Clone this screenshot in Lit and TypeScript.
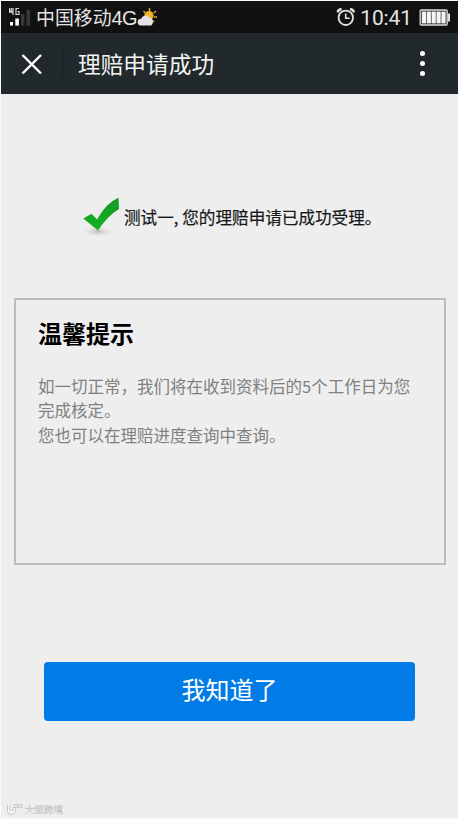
import { LitElement, html, css, svg } from "lit";
import { customElement } from "lit/decorators.js";

@customElement("status-bar")
class StatusBar extends LitElement {
  static styles = css`
    :host { display: flex; align-items: center; justify-content: space-between; height: 32px; background: #111; color: #e4e4e4; }
    .side { display: flex; align-items: center; }
    .carrier { font-size: 18.9px; line-height: 32px; margin-left: 5px; }
    .latin { font-family: "Liberation Sans", sans-serif; font-size: 20px; letter-spacing: -0.7px; }
    .time { font-family: Roboto, sans-serif; font-size: 21px; line-height: 32px; letter-spacing: -0.1px; margin: 1px 7px 0 4px; }
    .battery { margin-right: 8px; }
    svg { display: block; flex: none; }
  `;
  render() {
    return html`
      <div class="side">
        <svg width="30" height="32" viewBox="1 1 30 32">
          <path d="M11.3 8v3.6H9.4M13 8v7M9.6 8.2v4h4M19 8.5h-3v6h3v-3h-1.4" fill="none" stroke="#ddd" stroke-width="1.2"/>
          <rect x="10" y="22" width="3" height="3.6" fill="#fff"/>
          <rect x="15.3" y="18.5" width="3.6" height="7.1" fill="#fff"/>
          <rect x="21" y="14" width="3.4" height="11.6" fill="#383838"/>
          <rect x="26.5" y="10" width="3.5" height="15.6" fill="#383838"/>
        </svg>
        <div class="carrier">中国移动<span class="latin">4G</span></div>
        <svg width="20" height="32" viewBox="138 1 20 32">
          <path d="M150.5 8v3M144.5 11l2 2M157 11l-2.2 2M158 17h-3M155 22l-2-2" stroke="#d7a52b" stroke-width="1.5"/>
          <circle cx="150" cy="15.5" r="4.6" fill="#edb52b"/>
          <path d="M142 25.5a3.4 3.4 0 0 1 .2-6.8 4.4 4.4 0 0 1 7.8-1.200 4.300 4.300 0 0 1 3.800 5.200c-.3 2-1.300 2.800-3 2.800z" fill="#e4e4e6"/>
        </svg>
      </div>
      <div class="side">
        <svg width="20" height="32" viewBox="336 1 20 32">
          <g fill="none" stroke="#e2e2e2">
            <circle cx="345.8" cy="17.8" r="7.2" stroke-width="1.8"/>
            <path d="M345.7 13.4v4.8h4" stroke-width="1.6"/>
            <path d="M337.6 12.4q.8-3 4-3.400M354 12.400q-.8-3-4-3.400" stroke-width="2.400"/>
          </g>
        </svg>
        <div class="time">10:41</div>
        <svg class="battery" width="31" height="32" viewBox="418 1 31 32">
          <rect x="419.2" y="10" width="27" height="15" rx="1" fill="#333" stroke="#ddd" stroke-width="1.3"/>
          <rect x="447" y="13.500" width="2" height="8" fill="#ddd"/>
          ${[0, 1, 2, 3, 4].map((i) => svg`<rect x=${420.8 + i * 4.9} y="11.600" width="4.200" height="11.800" fill="#f4f4f4"/>`)}
        </svg>
      </div>
    `;
  }
}

@customElement("nav-bar")
class NavBar extends LitElement {
  static styles = css`
    :host { display: flex; align-items: center; height: 61px; background: #22292c; color: #f4f4f4; }
    svg { display: block; flex: none; }
    .close { margin-left: 20px; }
    .rule { width: 1px; height: 31px; margin: 0 15px 0 19px; background: #161c1f; }
    .title { flex: 1; font-size: 22.7px; line-height: 60px; font-weight: 400; margin: 0; }
    .menu { display: flex; flex-direction: column; gap: 5px; margin-right: 33px; }
    .dot { width: 5px; height: 5px; border-radius: 50%; background: #fff; }
  `;
  render() {
    return html`
      <svg class="close" width="22" height="22" viewBox="0 0 22 22">
        <path d="M1.5 2l18.5 18.5M20 2L1.500 20.500" stroke="#fff" stroke-width="2.4"/>
      </svg>
      <div class="rule"></div>
      <h1 class="title">理赔申请成功</h1>
      <div class="menu"><i class="dot"></i><i class="dot"></i><i class="dot"></i></div>
    `;
  }
}

@customElement("app-root")
class AppRoot extends LitElement {
  static styles = css`
    :host {
      display: flex; flex-direction: column; box-sizing: border-box; width: 459px; height: 820px;
      border: 1px solid #fbfbfb; border-bottom-width: 2px; background: #eee;
      font-family: "Noto Sans CJK SC", sans-serif; overflow: hidden;
    }
    .result { display: flex; align-items: center; height: 48px; margin: 98px 0 0 79px; }
    .tick { display: block; flex: none; width: 44px; height: 48px; }
    .message { margin-top: 1px; font-size: 16.6px; line-height: 24px; font-weight: 400; color: #181818; -webkit-text-stroke: 0.2px #181818; white-space: nowrap; }
    .comma { display: inline-block; width: 8.5px; }
    .tips { box-sizing: border-box; width: 432px; height: 267px; margin: 58px 0 0 12.5px; padding: 16px 22.5px; border: 2px solid #bdbdbd; }
    .heading { margin: 0; font-size: 24px; line-height: 34px; font-weight: 700; color: #000; }
    .text { margin: 24px 0 0; font-size: 16.5px; line-height: 24.4px; color: #808080; white-space: nowrap; }
    .ok { display: block; width: 371px; height: 59px; margin: 97px 0 0 43px; padding: 0 0 5px; border: 0; border-radius: 4px; background: #017be6; color: #fff; font: 400 24px/54px "Noto Sans CJK SC", sans-serif; }
    .mark { display: flex; align-items: center; gap: 2px; margin: auto 0 2px 5px; height: 14px; font-size: 9.5px; line-height: 14px; color: #f8f8f8; -webkit-text-stroke: 0.4px #bcbcbc; }
    .logo { display: block; }
  `;
  render() {
    return html`
      <status-bar></status-bar>
      <nav-bar></nav-bar>
      <div class="result">
        <svg class="tick" viewBox="80 192 44 48">
          <defs>
            <radialGradient id="shade"><stop offset="0" stop-color="#bdb6ba"/><stop offset="1" stop-color="#eee" stop-opacity="0"/></radialGradient>
            <linearGradient id="green" x1="0" y1="0" x2="0" y2="1"><stop offset="0" stop-color="#159a25"/><stop offset="1" stop-color="#16b21c"/></linearGradient>
          </defs>
          <ellipse cx="98" cy="231.500" rx="17" ry="6" fill="url(#shade)"/>
          <path d="M83.300 218.500L91.500 213.700L97 219.500Q106 203 118.500 197.700L119 209Q108 215.500 98 230.500Z" fill="url(#green)"/>
        </svg>
        <div class="message">测试一<span class="comma">,</span>您的理赔申请已成功受理。</div>
      </div>
      <section class="tips">
        <h2 class="heading">温馨提示</h2>
        <p class="text">如一切正常，我们将在收到资料后的5个工作日为您<br>完成核定。<br>您也可以在理赔进度查询中查询。</p>
      </section>
      <button class="ok">我知道了</button>
      <div class="mark">
        <svg class="logo" width="17" height="13" viewBox="0 0 17 13">
          <path d="M1.500 2v6.500q0 3 3.500 3t4.500-3V5.500M4 2v5q1 2 3 0V4M8.500 1.500h3v3h-3zM13 1.500h3v3h-3z" fill="#f6f6f6" stroke="#c4c4c4" stroke-width="1"/>
        </svg>
        <span>大型跨境</span>
      </div>
    `;
  }
}
